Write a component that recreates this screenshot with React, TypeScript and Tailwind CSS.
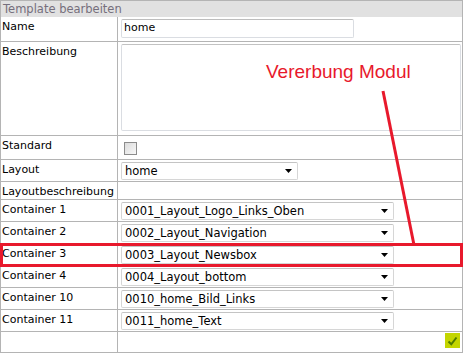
function Arrow() {
  return (
    <svg width="7" height="4" viewBox="0 0 7 4" className="shrink-0">
      <polygon points="0,0 7,0 3.5,4" fill="#000" />
    </svg>
  );
}

function Select({ value, width }: { value: string; width: string }) {
  return (
    <div
      className={`${width} h-[18px] flex items-center justify-between pl-[3px] pr-[5px] rounded-[2px] border border-[#d6d6d6] border-t-[#c4c4c4] bg-white`}
    >
      <span className="leading-[14px] text-[11.5px]">{value}</span>
      <Arrow />
    </div>
  );
}

const containers = [
  ["Container 1", "0001_Layout_Logo_Links_Oben"],
  ["Container 2", "0002_Layout_Navigation"],
  ["Container 3", "0003_Layout_Newsbox"],
  ["Container 4", "0004_Layout_bottom"],
  ["Container 10", "0010_home_Bild_Links"],
  ["Container 11", "0011_home_Text"],
];

function Row({
  label,
  height,
  children,
  last,
}: {
  label?: string;
  height: string;
  children?: React.ReactNode;
  last?: boolean;
}) {
  return (
    <div className={`flex ${height} ${last ? "" : "border-b border-[#b4b4b4]"}`}>
      <div className="w-[117px] shrink-0 border-r border-[#b4b4b4] pl-[1px] pt-[3px] leading-[14px]">
        {label}
      </div>
      <div className="flex-1 relative">{children}</div>
    </div>
  );
}

export default function App() {
  return (
    <div className="relative w-[466px] h-[358px] bg-white text-[11px] text-black font-['DejaVu_Sans',Verdana,sans-serif]">
      <div className="w-[463px] border border-[#b4b4b4]">
        <div className="h-[16px] bg-[#e1e1e1] pl-[2px] leading-[14px] pt-[1px] text-[11.5px] text-[#756f7c]">
          Template bearbeiten
        </div>
        <Row label="Name" height="h-[25px]">
          <div className="ml-[3px] mt-[2px] w-[233px] h-[19px] rounded-[2px] border border-[#dadde2] border-t-[#bdbdbd] pl-[2px] leading-[16px]">
            home
          </div>
        </Row>
        <Row label="Beschreibung" height="h-[94px]">
          <div className="ml-[3px] mt-[2px] w-[340px] h-[87px] rounded-[2px] border border-[#dadde2] border-t-[#c2c2c2]" />
        </Row>
        <Row label="Standard" height="h-[24px]">
          <div className="ml-[6px] mt-[6px] w-[13px] h-[13px] border border-[#8c8c8c] bg-gradient-to-br from-[#dcdcdc] to-[#f8f8f8]" />
        </Row>
        <Row label="Layout" height="h-[22px]">
          <div className="ml-[3px] mt-[2px]">
            <Select value="home" width="w-[177px]" />
          </div>
        </Row>
        <Row label="Layoutbeschreibung" height="h-[18px]" />
        {containers.map(([label, value]) => (
          <Row key={label} label={label} height="h-[22px]">
            <div className="ml-[3px] mt-[2px]">
              <Select value={value} width="w-[273px]" />
            </div>
          </Row>
        ))}
        <Row height="h-[20px]" last>
          <div className="flex justify-end pr-[2px] pt-[1px]">
            <div className="w-[15px] h-[15px] bg-[#c3d500] flex items-center justify-center">
              <svg width="11" height="10" viewBox="0 0 11 10">
                <path d="M1.5 5.5 L4.3 8.3 L9.5 1.5" fill="none" stroke="#4f7a00" strokeWidth="2" />
              </svg>
            </div>
          </div>
        </Row>
      </div>

      <div className="absolute left-0 top-[243px] w-[463px] h-[24px] border-[3px] border-[#e8192c]" />
      <svg className="absolute left-0 top-0" width="466" height="358">
        <line x1="383" y1="91" x2="414" y2="245" stroke="#e8192c" strokeWidth="3" />
      </svg>
      <div className="absolute left-[266px] top-[61px] text-[19px] leading-[22px] text-[#e8192c] font-['Liberation_Sans',Arial,sans-serif]">
        Vererbung Modul
      </div>
    </div>
  );
}
